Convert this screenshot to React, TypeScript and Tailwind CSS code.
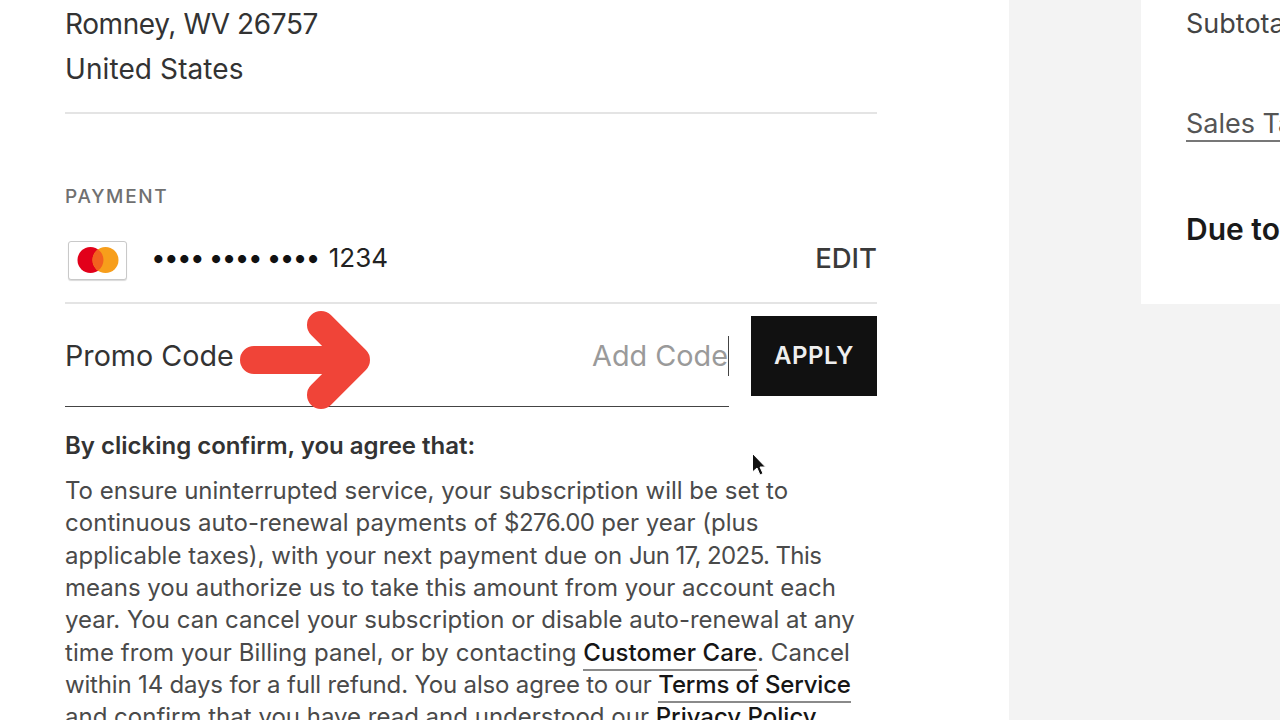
import React from 'react';

const font = "font-['Inter',sans-serif]";

const PaymentCardLogo = () => (
  <div className="w-[59px] h-[39px] border border-[#c9c9c9] rounded-[3px] bg-white flex items-center justify-center shadow-[0_1px_1px_rgba(0,0,0,0.15)]">
    <svg width="44" height="28" viewBox="0 0 44 28">
      <circle cx="14.5" cy="14" r="13" fill="#e2001a" />
      <circle cx="29.5" cy="14" r="13" fill="#f79e1b" />
      <path d="M22 3.4a13 13 0 0 1 0 21.2a13 13 0 0 1 0-21.2z" fill="#f2601f" />
    </svg>
  </div>
);

const Arrow = () => (
  <svg className="absolute left-[240px] top-[310px]" width="132" height="100" viewBox="0 0 132 100" fill="none">
    <path d="M14 50H116M81 15L116 50L81 85" stroke="#f04438" strokeWidth="28" strokeLinecap="round" strokeLinejoin="round" />
  </svg>
);

const Cursor = () => (
  <svg className="absolute left-[751px] top-[452px]" width="16" height="26" viewBox="0 0 16 26">
    <path d="M1.5 1.5V20L6 16L9 23L12 21.5L9 15H14.5Z" fill="#111" stroke="#fff" strokeWidth="1" />
  </svg>
);

const InlineLink = ({ children }: { children: React.ReactNode }) => (
  <span className="text-[#161616] font-medium border-b-2 border-[#8a8a8a] pb-[2px]">{children}</span>
);

export default function App() {
  return (
    <div className={`${font} relative w-[1280px] h-[720px] overflow-hidden bg-white flex`}>
      {/* Left column */}
      <div className="w-[1009px] shrink-0 pl-[65px] pr-[132px] pt-[2px]">
        <div className="text-[28px] leading-[44.5px] text-[#333]">
          <div className="tracking-[-0.4px]">Romney, WV 26757</div>
          <div className="tracking-[0.1px]">United States</div>
        </div>
        <div className="mt-[21px] h-[2px] bg-[#e4e4e4]" />

        <div className="mt-[72px] text-[19px] leading-[22px] tracking-[1.7px] font-medium text-[#707070]">PAYMENT</div>

        <div className="mt-[22px] h-[58px] flex items-center">
          <div className="ml-[3px] mt-[2px]">
            <PaymentCardLogo />
          </div>
          <div className="ml-[24px] flex items-center text-[26px] leading-[32px] text-[#222] -mt-[2px]">
            <span className="tracking-[-1.6px] text-[#111]">•••• •••• ••••</span>
            <span className="ml-[10px]">1234</span>
          </div>
          <span className="ml-auto text-[27.5px] font-medium text-[#3a3a3a]">EDIT</span>
        </div>
        <div className="mt-[14px] h-[2px] bg-[#e4e4e4]" />

        {/* Promo code */}
        <div className="mt-[12px] flex items-start gap-[22px]">
          <div className="flex-1 h-[91px] border-b border-[#444] flex items-start justify-between pt-[20px]">
            <span className="text-[28.7px] leading-[40px] text-[#333]">Promo Code</span>
            <span className="text-[28.8px] leading-[40px] text-[#9a9a9a] border-r border-[#444]">Add Code</span>
          </div>
          <button className="w-[126px] h-[80px] bg-[#111] text-[#eee] text-[24px] font-semibold tracking-[0.5px] flex items-center justify-center">
            APPLY
          </button>
        </div>

        <div className="mt-[19px] text-[24px] leading-[40px] font-semibold text-[#333]">By clicking confirm, you agree that:</div>

        <p className="mt-[9px] w-[800px] text-[24px] leading-[32.33px] text-[#4a4a4a]">
          To ensure uninterrupted service, your subscription will be set to<br />
          <span className="tracking-[0.06px]">continuous auto-renewal payments of </span>
          <span className="tracking-[-0.5px]">$276.00</span>
          <span> per year (plus</span><br />
          applicable taxes), with your next payment due on <span className="tracking-[-0.6px]">Jun 17, 2025. This</span><br />
          means you authorize us to take this amount from your account each<br />
          year. You can cancel your subscription or disable auto-renewal at any<br />
          <span className="tracking-[0.08px]">time from your Billing panel, or by contacting <InlineLink>Customer Care</InlineLink>. Cancel</span><br />
          <span className="tracking-[-0.17px]">within 14 days for a full refund. You also agree to our <InlineLink>Terms of Service</InlineLink></span><br />
          and confirm that you have read and understood our <InlineLink>Privacy Policy</InlineLink>
        </p>
      </div>

      {/* Right column */}
      <div className="flex-1 bg-[#f3f3f3] pl-[132px]">
        <div className="h-[304px] bg-white pl-[45px] overflow-hidden whitespace-nowrap">
          <div className="pt-[2px] text-[27px] leading-[44px] text-[#444]">Subtotal</div>
          <div className="mt-[56px] text-[27px] leading-[44px] text-[#555]">
            <span className="border-b-2 border-[#777]">Sales Tax</span>
          </div>
          <div className="mt-[61px] text-[30px] leading-[44px] font-semibold text-[#1a1a1a]">Due today</div>
        </div>
      </div>

      <Arrow />
      <Cursor />
    </div>
  );
}
